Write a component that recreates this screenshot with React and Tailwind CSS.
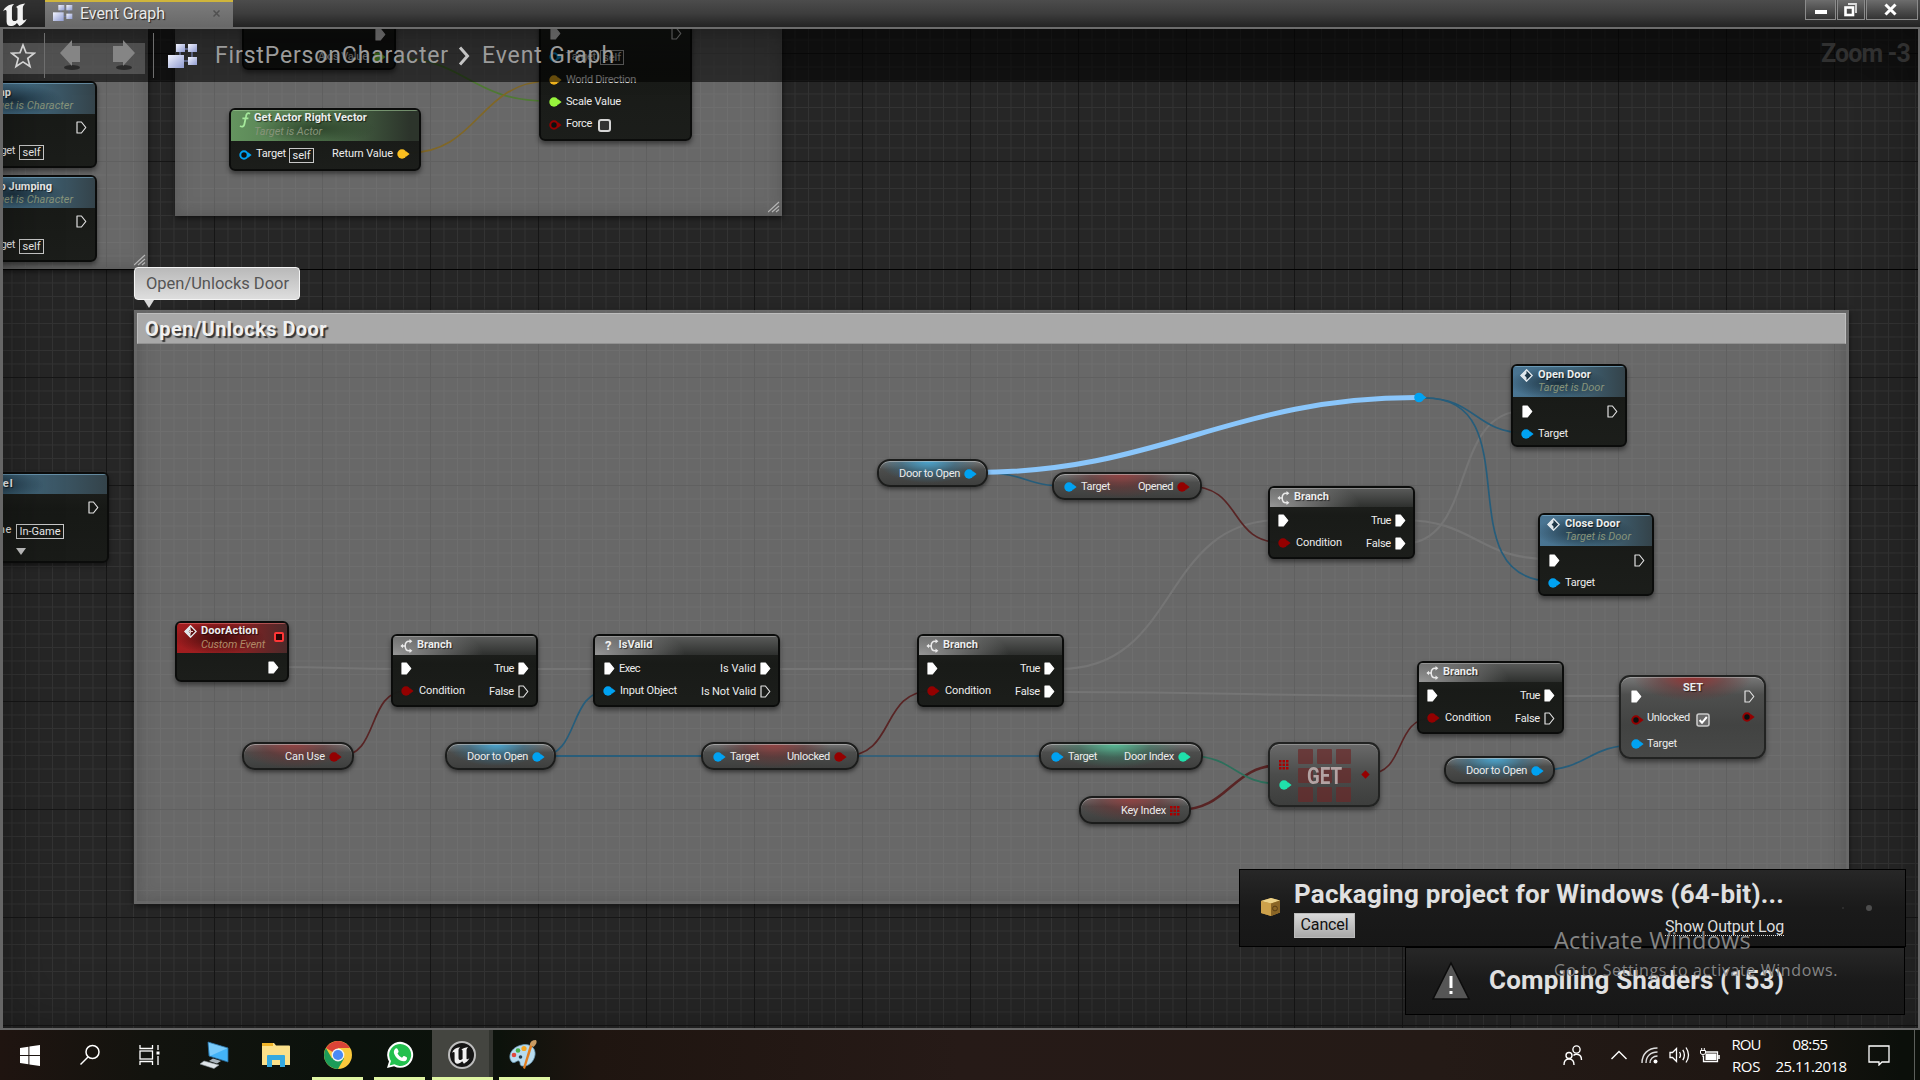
import React, { useLayoutEffect, useRef } from "react";

/* Text whose tracking is computed so that it fills the given width. */
function T({ w, className = "", children }) {
  const ref = useRef(null);
  useLayoutEffect(() => {
    const el = ref.current;
    if (!w || !el) return;
    el.style.letterSpacing = "0px";
    const natural = el.getBoundingClientRect().width;
    const n = el.textContent.length;
    el.style.letterSpacing = (w - natural) / n + "px";
  }, [w]);
  return (
    <span ref={ref} className={"inline-block w-fit shrink-0 whitespace-pre " + className}>
      {children}
    </span>
  );
}

const BLUE = "#00a2f2";
const RED = "#940000";
const TEAL = "#1fe0ab";

function Pin({ color, hollow, className = "" }) {
  return (
    <svg width="13" height="10" viewBox="0 0 13 10" className={"shrink-0 " + className}>
      <path d="M9 2.2 L12.6 5 L9 7.8 Z" fill={color} />
      {hollow ? (
        <circle cx="5" cy="5" r="3.7" fill="#0c1010" stroke={color} strokeWidth="2" />
      ) : (
        <circle cx="5" cy="5" r="4.7" fill={color} />
      )}
    </svg>
  );
}

function Exec({ on, className = "" }) {
  return (
    <svg width="11" height="13" viewBox="0 0 11 13" className={"shrink-0 " + className}>
      <path
        d="M1 1 H5.4 L9.8 6.5 L5.4 12 H1 Z"
        fill={on ? "#fff" : "none"}
        stroke={on ? "#fff" : "#e2e2e2"}
        strokeWidth="1.2"
        strokeLinejoin="round"
      />
    </svg>
  );
}

function GridPin({ className = "" }) {
  const cells = [0, 3.5, 7];
  return (
    <svg width="10" height="10" viewBox="0 0 10 10" className={"shrink-0 " + className}>
      {cells.map((x) => cells.map((y) => <rect key={x + "-" + y} x={x} y={y} width="2.5" height="2.5" fill="#a80000" />))}
    </svg>
  );
}

function BranchIcon() {
  return (
    <svg width="13" height="14" viewBox="0 0 13 14" fill="none" stroke="#e8e8e8" strokeWidth="1.5" className="shrink-0">
      <path d="M10.5 2.2 H9 C6.6 2.2 5.2 4 5.2 7 S6.6 11.8 9 11.8 H10.5" />
      <path d="M1.5 7 H5" />
      <path d="M9.5 0 L12.4 2.2 L9.5 4.4 Z M9.5 9.6 L12.4 11.8 L9.5 14 Z M3 4.8 V9.2 L0.4 7 Z" fill="#e8e8e8" stroke="none" />
    </svg>
  );
}

function DiamondIcon({ red }) {
  return (
    <svg width="13" height="13" viewBox="0 0 13 13" className="shrink-0">
      <path d="M6.5 0.8 L12.2 6.5 L6.5 12.2 L0.8 6.5 Z" fill={red ? "#5c1010" : "#203848"} stroke="#e8eef2" strokeWidth="1.3" />
      <path d="M6.5 0.8 L0.8 6.5 L6.5 12.2 V8.6 L4.6 6.5 L6.5 4.4 Z" fill="#dfe7ec" />
      {red && <path d="M5 6.5 H9 M6.5 4.4 V8.6" stroke="#e8c9c9" strokeWidth="1.1" />}
    </svg>
  );
}

const SELF = "border border-[#c8c8c8] h-[15px] flex items-center justify-center text-[11px] leading-none text-[#ececec]";
const BODY =
  "bg-[linear-gradient(180deg,rgba(32,34,31,0.97),rgba(22,24,21,0.97)_40%,rgba(25,27,24,0.97))] border-2 border-[#0b0c0b] rounded-[6px] shadow-[0_3px_5px_rgba(0,0,0,0.45)] overflow-hidden box-border absolute";
const HGREY =
  "bg-[radial-gradient(ellipse_90px_34px_at_0%_100%,rgba(170,170,170,0.85),rgba(140,140,140,0.5)_55%,rgba(120,120,120,0)_100%),linear-gradient(180deg,#5a5b5a,#2e302e)] shadow-[inset_0_1px_0_rgba(190,190,190,0.45)]";
const HBLUE =
  "bg-[radial-gradient(ellipse_50px_16px_at_40%_55%,rgba(22,40,52,0.85),rgba(30,50,64,0)_100%),linear-gradient(90deg,#4a7593,#42697f_50%,#34434a_100%)] shadow-[inset_0_1px_0_rgba(130,180,210,0.6)]";
const HRED =
  "bg-[radial-gradient(ellipse_46px_16px_at_38%_50%,rgba(50,8,8,0.85),rgba(70,12,12,0)_100%),linear-gradient(90deg,#a31d1f,#8c2022_55%,#4b2a2a_100%)] shadow-[inset_0_1px_0_rgba(225,110,110,0.6)]";
const HGREEN =
  "bg-[radial-gradient(ellipse_60px_16px_at_45%_60%,rgba(38,58,36,0.8),rgba(40,60,38,0)_100%),linear-gradient(90deg,#64945f,#4d704a_50%,#2c342b_95%)] shadow-[inset_0_1px_0_rgba(160,200,150,0.6)]";
const TITLE = "font-bold text-[11px] leading-[12px] text-[#eceeee] [text-shadow:1px_1px_1px_rgba(0,0,0,0.6)]";
const SUB = "italic text-[11px] leading-[12px] ";
const OLIVE = "text-[#87947a]";
const LBL = "text-[11px] leading-[12px] text-[#ececec]";

function Branch({ at, falseOn }) {
  return (
    <div className={BODY + " w-[147px] h-[73px] " + at}>
      <div className={"h-[19px] flex items-center gap-[4px] pl-[7px] " + HGREY}>
        <BranchIcon />
        <T w={35} className={TITLE + " -mt-px"}>Branch</T>
      </div>
      <div className="flex justify-between pl-2 pr-[7px]">
        <div className="flex flex-col">
          <div className="h-[27px] flex items-center"><Exec on /></div>
          <div className="h-[17px] flex items-center gap-[5px]">
            <Pin color={RED} />
            <T w={46} className={LBL}>Condition</T>
          </div>
        </div>
        <div className="flex flex-col items-end">
          <div className="h-[27px] flex items-center gap-[4px]"><T w={20} className={LBL}>True</T><Exec on /></div>
          <div className="h-[19px] flex items-center gap-[4px]"><T w={25} className={LBL}>False</T><Exec on={falseOn} /></div>
        </div>
      </div>
    </div>
  );
}

function DoorCall({ at, title, w }) {
  return (
    <div className={BODY + " w-[116px] h-[83px] " + at}>
      <div className={"h-[31px] flex gap-[5px] pl-[7px] pt-[3px] " + HBLUE}>
        <DiamondIcon />
        <div className="flex flex-col gap-[1px]">
          <T w={w} className={TITLE}>{title}</T>
          <T w={66} className={SUB + OLIVE}>Target is Door</T>
        </div>
      </div>
      <div className="h-[28px] flex items-center justify-between pl-[9px] pr-[7px]"><Exec on /><Exec /></div>
      <div className="h-[17px] flex items-center gap-[4px] pl-[8px]"><Pin color={BLUE} /><T w={30} className={LBL}>Target</T></div>
    </div>
  );
}

const PILL =
  "absolute h-[28px] box-border border-2 border-[#1b1c1b] rounded-[13px] flex items-center overflow-hidden shadow-[0_2px_4px_rgba(0,0,0,0.5),inset_0_1px_0_rgba(200,200,200,0.55)] pt-px ";
const PBLUE = "bg-[radial-gradient(ellipse_50px_22px_at_46%_0%,rgba(72,168,212,0.95),rgba(50,120,155,0.5)_55%,rgba(60,100,120,0)_100%),linear-gradient(180deg,#777_0%,#4c4d4c_35%,#3e3f3e_100%)] ";
const PRED = "bg-[radial-gradient(ellipse_56px_24px_at_46%_0%,rgba(150,62,62,0.9),rgba(110,48,48,0.5)_55%,rgba(100,60,60,0)_100%),linear-gradient(180deg,#777_0%,#4c4d4c_35%,#3e3f3e_100%)] ";
const PTEAL = "bg-[radial-gradient(ellipse_66px_24px_at_46%_0%,rgba(84,190,150,0.95),rgba(60,130,105,0.5)_55%,rgba(60,100,90,0)_100%),linear-gradient(180deg,#777_0%,#4c4d4c_35%,#3e3f3e_100%)] ";

function DoorToOpen({ at }) {
  return (
    <div className={PILL + PBLUE + "w-[111px] justify-end gap-[4px] pr-[9px] " + at}>
      <T w={61} className={LBL}>Door to Open</T>
      <Pin color={BLUE} />
    </div>
  );
}

function Pair({ at, tone, label, w, color }) {
  return (
    <div className={PILL + tone + "justify-between pl-[10px] pr-[10px] " + at}>
      <div className="flex items-center gap-[4px]"><Pin color={BLUE} /><T w={29} className={LBL}>Target</T></div>
      <div className="flex items-center gap-[4px]"><T w={w} className={LBL}>{label}</T><Pin color={color} /></div>
    </div>
  );
}

function wire(x1, y1, x2, y2, k = 0.5) {
  const d = Math.abs(x2 - x1) * k;
  return `M${x1} ${y1} C${x1 + d} ${y1} ${x2 - d} ${y2} ${x2} ${y2}`;
}

function Wires() {
  const grey = [
    [275, 667, 404, 669], [525, 669, 606, 669], [768, 669, 926, 669], [1060, 669, 1280, 520, 0.55],
    [1060, 692, 1430, 696], [1560, 696, 1634, 696], [1402, 520, 1550, 559], [1402, 544, 1524, 411, 0.62],
  ];
  const blue = [
    [985, 473, 1066, 486], [1425, 398, 1526, 433], [1425, 398, 1552, 581, 0.85],
    [540, 756, 608, 691, 0.6], [540, 756, 718, 756], [540, 756, 1055, 756], [1540, 770, 1636, 745],
  ];
  const red = [[1187, 486, 1284, 543, 0.6], [340, 756, 406, 691, 0.6], [844, 756, 932, 691, 0.6], [1368, 774, 1432, 718, 0.6]];
  return (
    <svg width="1920" height="1080" className="absolute left-0 top-0 pointer-events-none" fill="none">
      {grey.map((a, i) => <path key={i} d={wire(...a)} stroke="#757575" strokeWidth="2.2" />)}
      {blue.map((a, i) => <path key={i} d={wire(...a)} stroke="#265d7b" strokeWidth="1.7" />)}
      {red.map((a, i) => <path key={i} d={wire(...a)} stroke="#582424" strokeWidth="1.7" />)}
      <path d={wire(1178, 810, 1282, 765)} stroke="#582424" strokeWidth="2.6" />
      <path d={wire(1190, 756, 1280, 784)} stroke="#2c6f5b" strokeWidth="1.7" />
      <path d={wire(388, 57, 548, 101)} stroke="#4f7a33" strokeWidth="1.7" />
      <path d={wire(408, 153, 550, 81)} stroke="#806726" strokeWidth="1.7" />
      <path d={wire(975, 472.5, 1416, 397.5, 0.42)} stroke="#8ac6fb" strokeWidth="5" />
      <circle cx="1419" cy="397.5" r="4.8" fill={BLUE} />
      <path d="M1422 394.5 L1426.5 397.5 L1422 400.5 Z" fill={BLUE} />
    </svg>
  );
}

const COMMENT = "absolute bg-[rgba(170,170,170,0.5)] border-[#5e5e5e] shadow-[0_2px_6px_rgba(0,0,0,0.6),inset_0_0_16px_rgba(60,60,60,0.35)]";

function Handle({ at }) {
  return (
    <svg width="12" height="12" viewBox="0 0 12 12" className={"absolute " + at} stroke="#b5b5b5" strokeWidth="1.2">
      <path d="M0 11 L11 1 M4 11 L11 5 M8 11 L11 8.5" />
    </svg>
  );
}

function CharNode({ at, title, w }) {
  return (
    <div className={BODY + " w-[141px] h-[87px] " + at}>
      <div className={"h-[31px] pl-[25px] pt-[4px] flex flex-col gap-[1px] " + HBLUE}>
        <T w={w} className={TITLE}>{title}</T>
        <T w={90} className={SUB + OLIVE}>Target is Character</T>
      </div>
      <div className="h-[27px] flex items-center justify-end pr-[8px]"><Exec /></div>
      <div className="flex items-start gap-[4px] pl-[28px] pt-[4px]">
        <T w={29} className={LBL}>Target</T>
        <div className={SELF + " w-[25px]"}>self</div>
      </div>
    </div>
  );
}

function GraphIcon({ className }) {
  return (
    <svg viewBox="0 0 30 26" className={className}>
      <defs>
        <linearGradient id="gi" x1="0" y1="0" x2="1" y2="1">
          <stop offset="0" stopColor="#f2f4ff" />
          <stop offset="1" stopColor="#8f9bd0" />
        </linearGradient>
      </defs>
      <path d="M12 6 H24 V18 M12 6 V18 H24" stroke="#6c76a0" strokeWidth="1.4" fill="none" />
      <g fill="url(#gi)">
        <rect x="8" y="1" width="9" height="8" />
        <rect x="20" y="1" width="9" height="8" />
        <rect x="0" y="12" width="16" height="13" />
        <rect x="20" y="14" width="9" height="8" />
      </g>
    </svg>
  );
}

function UnrealMark({ className }) {
  return (
    <svg viewBox="0 0 28 26" className={className} fill="#f2f2f2">
      <path d="M0 9 C2 4 6 1.5 12 1 C9.8 3 9.6 4 9.6 6 V16.5 C9.6 18.6 11 19.8 12.6 19.6 C14 19.4 15 18.6 15.6 17.8 V6.4 C15.6 5 14.8 4.4 13.6 4.6 C16 2.6 19.5 1.2 24 0.6 C22.2 2.4 21.4 3.6 21.4 5.6 V17 C21.4 18.8 22.4 19.4 25.6 17.2 C23.8 21 21 23.4 17.6 25 L15 21.6 C13 24 10.4 25 8 25 C5.4 24.8 3.8 23.4 3.8 20 V9.6 C3.8 7.4 2.4 7 0 9 Z" />
    </svg>
  );
}

function TitleBar() {
  const btn = "h-[20px] border border-[#8b8b8b] border-t-0 bg-gradient-to-b from-[#6d6d6d] to-[#343434] flex items-center justify-center shrink-0";
  return (
    <header className="h-[29px] shrink-0 flex items-start border-b-2 border-[#6c6c6c] bg-gradient-to-b from-[#4c4c4c] via-[#3d3d3d] to-[#232323]">
      <div className="w-[45px] h-[27px] shrink-0 bg-[#202020]/60"><UnrealMark className="w-[28px] h-[24px] mt-[3px] ml-[2px]" /></div>
      <div className="w-[188px] h-[27px] shrink-0 border-t-2 border-[#cfb53c] bg-gradient-to-b from-[#7c7c7c] to-[#686868] flex items-center pl-2">
        <GraphIcon className="w-[20px] h-[18px] -mt-[3px]" />
        <T w={85} className="ml-[7px] -mt-[2px] text-[16px] leading-none text-[#e9e9e9] [text-shadow:1px_1px_1px_#222]">Event Graph</T>
        <svg width="7" height="7" viewBox="0 0 7 7" className="ml-[48px] -mt-[2px]" stroke="#505050" strokeWidth="1.5"><path d="M0.5 0.5 L6.5 6.5 M6.5 0.5 L0.5 6.5" /></svg>
      </div>
      <div className="flex-1" />
      <div className="flex gap-px pr-[2px]">
        <div className={btn + " w-[31px]"}><div className="w-[12px] h-[4px] bg-[#fff] mt-[5px]" /></div>
        <div className={btn + " w-[28px]"}>
          <svg width="13" height="14" viewBox="0 0 13 14" fill="none" stroke="#fff" className="mr-[2px]"><rect x="1.5" y="4.5" width="7.5" height="7.5" strokeWidth="2.6" /><path d="M4 1 H12 V10" strokeWidth="1.8" stroke="#ddd" /></svg>
        </div>
        <div className={btn + " w-[52px]"}>
          <svg width="13" height="13" viewBox="0 0 13 13" stroke="#fff" strokeWidth="3" className="mr-[3px]"><path d="M1.5 1.5 L11.5 11.5 M11.5 1.5 L1.5 11.5" /></svg>
        </div>
      </div>
    </header>
  );
}

function Breadcrumb() {
  return (
    <div className="absolute left-0 top-[29px] w-full h-[53px] bg-[rgba(0,0,0,0.57)] flex items-center">
      <div className="flex items-center h-[46px] relative">
        <div className="absolute left-0 top-[10px] w-[145px] h-[31px] bg-[rgba(150,150,150,0.36)]" />
        <div className="relative w-[44px] flex justify-center pl-[2px]">
          <svg width="26" height="26" viewBox="0 0 26 26" fill="none" stroke="#d4d4d4" strokeWidth="1.7"><path d="M13 2 L16 9.8 L24.3 10.2 L17.8 15.4 L20 23.5 L13 18.9 L6 23.5 L8.2 15.4 L1.7 10.2 L10 9.8 Z" /></svg>
        </div>
        <div className="relative w-px h-[45px] bg-[#6e6e6e]" />
        <svg width="108" height="36" viewBox="0 0 108 36" className="relative">
          <ellipse cx="27" cy="29.5" rx="8" ry="2.5" fill="#1a1a1a" opacity="0.7" />
          <ellipse cx="79" cy="29.5" rx="8" ry="2.5" fill="#1a1a1a" opacity="0.7" />
          <path d="M15 15 L27 2 V8 H35 V24 H27 V28 Z" fill="#858585" />
          <path d="M90 15 L78 2 V8 H68 V24 H78 V28 Z" fill="#858585" />
        </svg>
        <div className="relative w-px h-[45px] bg-[#6e6e6e]" />
      </div>
      <GraphIcon className="w-[30px] h-[26px] ml-[14px]" />
      <T w={234} className="ml-[17px] text-[23px] leading-none text-[#9b9b9b]">FirstPersonCharacter</T>
      <svg width="12" height="20" viewBox="0 0 12 20" className="ml-[9px] mt-[1px]" fill="none" stroke="#c4c4c4" strokeWidth="3"><path d="M2 1.5 L9.5 10 L2 18.5" /></svg>
      <T w={133} className="ml-[12px] text-[23px] leading-none text-[#9b9b9b] -mt-[1px]">Event Graph</T>
      <div className="flex-1" />
      <T w={89} className="mr-[10px] text-[25px] leading-none font-bold text-[#303030] -mt-[4px]">Zoom -3</T>
    </div>
  );
}

function Graph() {
  return (
    <>
      {/* comment regions */}
      <div className={COMMENT + " left-0 top-[29px] w-[148px] h-[240px] border-b-2"}><Handle at="right-[2px] bottom-[1px]" /></div>
      <div className={COMMENT + " left-[175px] top-[29px] w-[607px] h-[187px] border-b"}><Handle at="right-[2px] bottom-[2px]" /></div>
      <div className={COMMENT + " left-[134px] top-[310px] w-[1715px] h-[594px] border-[3px] border-[#676767]/60"}>
        <div className="h-[31px] bg-[#a9a9a9] border border-[#bdbdbd] border-b-[#929292] flex items-center pl-[7px]">
          <T w={182} className="text-[20px] leading-none font-bold text-[#f1f1f1] [text-shadow:2px_2px_1px_#333]">Open/Unlocks Door</T>
        </div>
      </div>
      <div className="absolute left-[134px] top-[267px] w-[166px] h-[33px] rounded-[4px] border border-[#f4f4f4] bg-gradient-to-b from-[#b9b9b9] to-[#dedede] flex items-center pl-[11px] pt-[2px]">
        <T w={143} className="text-[16.5px] leading-none text-[#555]">Open/Unlocks Door</T>
      </div>
      <svg width="10" height="8" viewBox="0 0 10 8" className="absolute left-[144px] top-[300px]"><path d="M0 0 H10 L5 8 Z" fill="#d8d8d8" /></svg>

      <Wires />

      {/* character nodes, cut by the window edge */}
      <CharNode at="left-[-44px] top-[81px]" title="Jump" w={28} />
      <CharNode at="left-[-44px] top-[175px]" title="Stop Jumping" w={69} />
      <div className={BODY + " left-[-83px] top-[472px] w-[192px] h-[91px]"}>
        <div className={"h-[20px] flex items-center justify-start pl-[28px] " + HBLUE}><T w={67} className={TITLE}>Open Level</T></div>
        <div className="h-[27px] flex items-center justify-end pr-[8px]"><Exec /></div>
        <div className="flex items-start gap-[4px] justify-end pr-[43px] pt-[3px]">
          <T w={64} className={LBL}>Level Name</T>
          <div className={SELF + " w-[48px]"}>In-Game</div>
        </div>
        <svg width="10" height="7" viewBox="0 0 10 7" className="ml-[97px] mt-[9px]"><path d="M0 0 H10 L5 7 Z" fill="#c4c4c4" /></svg>
      </div>

      {/* movement input nodes */}
      <div className={BODY + " left-[242px] top-[20px] w-[154px] h-[50px]"}>
        <div className="flex justify-end pr-[8px] pt-[6px]"><Exec on /></div>
        <div className="flex items-center justify-end gap-[5px] pr-[8px] mt-[10px]"><T w={50} className={LBL}>Axis Value</T><Pin color="#7ee03a" /></div>
      </div>
      <div className={BODY + " left-[539px] top-[20px] w-[153px] h-[121px]"}>
        <div className="flex justify-between pl-[9px] pr-[8px] pt-[5px]"><Exec on /><Exec /></div>
        <div className="flex flex-col pl-[8px]">
          <div className="flex items-center gap-[4px] h-[24px] mt-[5px]"><Pin color={BLUE} hollow /><T w={30} className={LBL}>Target</T><div className={SELF + " w-[24px]"}>self</div></div>
          <div className="flex items-center gap-[4px] h-[22px]"><Pin color="#f0b41e" /><T w={70} className={LBL}>World Direction</T></div>
          <div className="flex items-center gap-[4px] h-[21px]"><Pin color="#97f43c" /><T w={55} className={LBL}>Scale Value</T></div>
          <div className="flex items-center gap-[4px] h-[26px]"><Pin color={RED} hollow /><T w={26} className={LBL + " -mt-[3px]"}>Force</T><div className="w-[13px] h-[13px] border-2 border-[#d5d5d5] rounded-[3px] bg-[#333] ml-[2px]" /></div>
        </div>
      </div>
      <div className={BODY + " left-[229px] top-[108px] w-[192px] h-[63px]"}>
        <div className={"h-[31px] flex gap-[4px] pl-[8px] pt-[2px] " + HGREEN}>
          <svg width="12" height="16" viewBox="0 0 12 16" fill="none" stroke="#a5e89b" strokeWidth="1.8"><path d="M11 1.8 C8.5 0.2 7.4 2 7 4.5 L5.4 12 C5 14.4 3.4 15.4 1 14 M3.4 6.4 H9.4" /></svg>
          <div className="flex flex-col gap-[2px] -ml-[1px]">
            <T w={113} className={TITLE}>Get Actor Right Vector</T>
            <T w={68} className={SUB + OLIVE}>Target is Actor</T>
          </div>
        </div>
        <div className="flex items-center justify-between pl-[8px] pr-[9px] h-[26px]">
          <div className="flex items-center gap-[3px] pt-[2px]"><Pin color={BLUE} hollow /><T w={30} className={LBL + " -mt-[3px] ml-px"}>Target</T><div className={SELF + " w-[25px]"}>self</div></div>
          <div className="flex items-center gap-[4px] -mt-[1px]"><T w={61} className={LBL}>Return Value</T><Pin color="#fbbf1f" /></div>
        </div>
      </div>

      {/* door logic, upper part */}
      <DoorToOpen at="left-[877px] top-[459px]" />
      <Pair at="left-[1052px] top-[472px] w-[150px]" tone={PRED} label="Opened" w={35} color={RED} />
      <Branch at="left-[1268px] top-[486px]" falseOn />
      <DoorCall at="left-[1511px] top-[364px]" title="Open Door" w={53} />
      <DoorCall at="left-[1538px] top-[513px]" title="Close Door" w={55} />

      {/* door logic, lower part */}
      <div className={BODY + " left-[175px] top-[621px] w-[114px] h-[61px]"}>
        <div className={"h-[30px] flex gap-[4px] pl-[7px] pt-[2px] " + HRED}>
          <DiamondIcon red />
          <div className="flex flex-col gap-[2px]">
            <T w={57} className={TITLE}>DoorAction</T>
            <T w={64} className={SUB + "text-[#b08a66]"}>Custom Event</T>
          </div>
          <div className="w-[10px] h-[10px] shrink-0 border-2 border-[#ff3636] rounded-[2px] bg-[#2a0505] mt-[7px] ml-[5px]" />
        </div>
        <div className="flex justify-end pr-[8px] pt-[8px]"><Exec on /></div>
      </div>
      <Branch at="left-[391px] top-[634px]" />
      <div className={PILL + PRED + "left-[242px] top-[742px] w-[112px] justify-end gap-[4px] pr-[10px]"}><T w={40} className={LBL}>Can Use</T><Pin color={RED} /></div>
      <DoorToOpen at="left-[445px] top-[742px]" />
      <div className={BODY + " left-[593px] top-[634px] w-[187px] h-[73px]"}>
        <div className={"h-[19px] flex items-center gap-[7px] pl-[10px] " + HGREY}>
          <span className="font-bold text-[13px] leading-none text-[#f0f0f0]">?</span>
          <T w={34} className={TITLE + " -mt-px"}>IsValid</T>
        </div>
        <div className="flex justify-between pl-[9px] pr-[7px]">
          <div className="flex flex-col">
            <div className="h-[27px] flex items-center gap-[4px]"><Exec on /><T w={21} className={LBL}>Exec</T></div>
            <div className="h-[17px] flex items-center gap-[4px] -ml-px"><Pin color={BLUE} /><T w={57} className={LBL}>Input Object</T></div>
          </div>
          <div className="flex flex-col items-end">
            <div className="h-[27px] flex items-center gap-[4px]"><T w={36} className={LBL}>Is Valid</T><Exec on /></div>
            <div className="h-[19px] flex items-center gap-[4px]"><T w={55} className={LBL}>Is Not Valid</T><Exec /></div>
          </div>
        </div>
      </div>
      <Pair at="left-[701px] top-[742px] w-[158px]" tone={PRED} label="Unlocked" w={43} color={RED} />
      <Branch at="left-[917px] top-[634px]" falseOn />
      <Pair at="left-[1039px] top-[742px] w-[164px]" tone={PTEAL} label="Door Index" w={50} color={TEAL} />
      <div className={PILL + PRED + "left-[1079px] top-[796px] w-[112px] justify-end gap-[4px] pr-[9px]"}><T w={45} className={LBL}>Key Index</T><GridPin /></div>
      <div className="absolute left-[1268px] top-[742px] w-[112px] h-[65px] border-2 border-[#222322] rounded-[11px] bg-gradient-to-b from-[#6a6a6a] via-[#4b4c4b] to-[#3d3e3d] shadow-[0_3px_5px_rgba(0,0,0,0.45),inset_0_1px_0_rgba(200,200,200,0.4)] flex items-center pl-[9px] pr-[8px]">
        <div className="flex flex-col gap-[10px]"><GridPin /><Pin color={TEAL} /></div>
        <div className="relative ml-[6px] grid grid-cols-3 gap-[4px] mt-[2px]">
          {[0, 1, 2, 3, 4, 5, 6, 7, 8].map((i) => <div key={i} className="w-[15px] h-[15px] rounded-[1px] bg-[#6b2a2a] opacity-70 blur-[0.7px]" />)}
          <div className="absolute inset-0 flex items-center justify-center text-[24px] leading-none font-bold text-[#b3a3a3] scale-x-[0.78]">GET</div>
        </div>
        <svg width="9" height="9" viewBox="0 0 9 9" className="ml-auto"><path d="M4.5 0.3 L8.7 4.5 L4.5 8.7 L0.3 4.5 Z" fill="#960000" /></svg>
      </div>
      <Branch at="left-[1417px] top-[661px]" />
      <DoorToOpen at="left-[1444px] top-[756px]" />
      <div className="absolute left-[1619px] top-[675px] w-[147px] h-[84px] border-2 border-[#222322] rounded-[11px] overflow-hidden bg-[radial-gradient(ellipse_60px_24px_at_50%_0%,rgba(150,46,46,0.95),rgba(110,48,48,0.5)_55%,rgba(90,60,60,0)_100%),linear-gradient(180deg,#787878_0%,#4e4f4e_22%,#424342_60%,#474847_100%)] shadow-[0_3px_5px_rgba(0,0,0,0.45),inset_0_1px_0_rgba(200,200,200,0.5)] flex flex-col pl-[10px] pr-[9px]">
        <div className="flex justify-between h-[30px] pt-[13px]"><Exec on /><T w={20} className={TITLE + " -mt-[8px]"}>SET</T><Exec /></div>
        <div className="flex justify-between h-[22px] items-center mt-[3px]">
          <div className="flex items-center gap-[4px]"><Pin color={RED} hollow /><T w={43} className={LBL + " -mt-[4px] -ml-px"}>Unlocked</T>
            <svg width="14" height="14" viewBox="0 0 14 14" className="ml-[2px]"><rect x="1" y="1" width="12" height="12" rx="2" fill="#6a6a6a" stroke="#c9c9c9" strokeWidth="1.6" /><path d="M3.6 7 L6 9.8 L10.8 4" stroke="#fff" strokeWidth="2" fill="none" /></svg>
          </div>
          <Pin color={RED} hollow className="-mt-[5px]" />
        </div>
        <div className="flex items-center gap-[4px] h-[28px]"><Pin color={BLUE} /><T w={30} className={LBL + " -ml-px"}>Target</T></div>
      </div>
    </>
  );
}

function Notices() {
  const box = "absolute border border-black bg-gradient-to-b from-[#272727] via-[#1a1a1a] to-[#171717] ";
  return (
    <>
      <div className={box + "left-[1239px] top-[869px] w-[667px] h-[78px] flex"}>
        <svg width="21" height="20" viewBox="0 0 21 20" className="ml-[20px] mt-[27px]">
          <path d="M1 4 L11 1 L20 3.5 V15.5 L11 19 L1 16 Z" fill="#b98f3c" />
          <path d="M1 4 L11 1 L20 3.5 L11 6.5 Z" fill="#ecd28a" />
          <path d="M11 6.5 L20 3.5 V15.5 L11 19 Z" fill="#8b6626" />
          <path d="M1 4 L11 6.5 V19 L1 16 Z" fill="#cda14b" />
          <circle cx="15" cy="11.5" r="2.4" fill="none" stroke="#5a3f14" />
        </svg>
        <div className="ml-[13px] mt-[10px] w-[491px] flex flex-col">
          <T w={490} className="text-[26px] leading-[28px] font-bold text-[#e0e0e0]">Packaging project for Windows (64-bit)...</T>
          <div className="flex justify-between items-start mt-[5px]">
            <div className="w-[61px] h-[25px] bg-gradient-to-b from-[#d8d8d8] to-[#a9a9a9] border border-[#bbb] flex items-center justify-center"><T w={48} className="text-[16px] leading-none text-[#111] -mt-px">Cancel</T></div>
            <T w={119} className="text-[16px] leading-none text-[#dedede] border-b border-dotted border-[#ddd] mt-[6px] mr-px">Show Output Log</T>
          </div>
        </div>
        <div className="flex items-center ml-[57px] gap-[22px]"><div className="w-[2px] h-[2px] rounded-full bg-[#333]" /><div className="w-[6px] h-[6px] rounded-full bg-[#4d4d4d]" /></div>
      </div>
      <div className={box + "left-[1405px] top-[947px] w-[500px] h-[68px] flex items-center"}>
        <svg width="40" height="40" viewBox="0 0 40 40" className="ml-[25px]"><path d="M20 2 L38 38 H2 Z" fill="#555" stroke="#0c0c0c" strokeWidth="1.6" /><path d="M20 15 V27 M20 30 V33" stroke="#fff" strokeWidth="3" /></svg>
        <T w={295} className="ml-[18px] -mt-[2px] text-[26px] leading-none font-bold text-[#e0e0e0]">Compiling Shaders (153)</T>
      </div>
      <div className="absolute left-[1554px] top-[926px] flex flex-col font-['Open_Sans','Noto_Sans',sans-serif] text-[#858585]">
        <T w={197} className="text-[23.5px] leading-[28px]">Activate Windows</T>
        <T w={284} className="text-[16px] leading-[20px] mt-[6px]">Go to Settings to activate Windows.</T>
      </div>
    </>
  );
}

function Taskbar() {
  const slot = "h-full flex items-center justify-center shrink-0 relative ";
  const line = <div className="absolute left-0 bottom-0 w-full h-[3px] bg-[#dff5a3]" />;
  return (
    <footer className="h-[50px] shrink-0 flex items-center text-white font-['Open_Sans','Noto_Sans',sans-serif] bg-[linear-gradient(90deg,#1f1410_0%,#12130e_8%,#0b120c_18%,#0c120b_26%,#1f1510_31%,#261a17_50%,#241a16_75%,#1f1713_90%,#0b0f0a_99%)]">
      <div className={slot + "w-[60px]"}>
        <svg width="20" height="21" viewBox="0 0 20 21" fill="#fff"><path d="M0 3 L8.4 1.8 V10 H0 Z M9.4 1.6 L20 0 V10 H9.4 Z M0 11 H8.4 V19.2 L0 18 Z M9.4 11 H20 V21 L9.4 19.4 Z" /></svg>
      </div>
      <div className={slot + "w-[60px]"}>
        <svg width="22" height="22" viewBox="0 0 22 22" fill="none" stroke="#fff" strokeWidth="1.5"><circle cx="13.5" cy="8" r="6.5" /><path d="M9 13 L1.5 20.5" /></svg>
      </div>
      <div className={slot + "w-[60px]"}>
        <svg width="22" height="20" viewBox="0 0 22 20" fill="none" stroke="#fff" strokeWidth="1.3"><path d="M1 0 V3.5 H13.5 V0 M1 20 V16.5 H13.5 V20" /><rect x="1" y="6" width="12.5" height="8" /><path d="M19 0 V5 M19 11 V20" /><rect x="17.5" y="6.5" width="3" height="3" fill="#fff" stroke="none" /></svg>
      </div>
      <div className={slot + "w-[68px]"}>
        <svg width="29" height="28" viewBox="0 0 29 28"><path d="M8 1 L28 7 V21 L9 15 Z" fill="#43b3f7" /><path d="M8 1 L28 7 L10 15 Z" fill="#79cbfb" /><path d="M8 1 L28 7 V21 L9 15 Z" fill="none" stroke="#2a6c9c" strokeWidth="0.8" /><path d="M13 17.5 L21 20 L17 22.5 L9 20 Z" fill="#a9b4bb" /><path d="M4 20 L19 24 L14 27.5 L0 23 Z" fill="#dfe5e8" stroke="#8d989f" strokeWidth="0.6" /></svg>
      </div>
      <div className={slot + "w-[56px]"}>
        <svg width="28" height="25" viewBox="0 0 28 25"><path d="M0 1 Q0 0 1 0 H12 L14 2.5 H27 Q28 2.5 28 3.5 V22 H0 Z" fill="#fbe08a" /><rect x="0" y="0" width="11" height="3" fill="#f0b429" /><path d="M5 24 V13 Q5 12 6 12 H22 Q23 12 23 13 V24 H18 V17 H10 V24 Z" fill="#35a9e0" /></svg>
      </div>
      <div className={slot + "w-[51px] ml-[8px]"}>
        <svg width="28" height="28" viewBox="0 0 28 28"><circle cx="14" cy="14" r="14" fill="#fbc93c" /><path d="M14 14 L1.9 7 A14 14 0 0 1 26.1 7 H14 Z" fill="#db4437" /><path d="M1.9 7 A14 14 0 0 0 14 28 L20 17.4 L14 14 L8 17.4 Z" fill="#1c9c58" /><circle cx="14" cy="14" r="6.4" fill="#f4f4f4" /><circle cx="14" cy="14" r="5.1" fill="#4a8af4" /></svg>
        {line}
      </div>
      <div className={slot + "w-[51px] ml-[11px]"}>
        <svg width="28" height="28" viewBox="0 0 28 28"><path d="M1 27 L3 20.5 A13 13 0 1 1 8 25.3 Z" fill="#fff" /><path d="M3.6 24.6 L5 20 A11 11 0 1 1 8.4 23.3 Z" fill="#23c04e" /><path d="M9.5 7.5 Q11 6.7 11.7 8.2 L12.6 10.3 Q12.8 11 11.5 12.4 Q13 15.3 16 16.7 L17.6 15 Q18 14.6 21 16.4 Q21.4 19.6 18 20.3 C13 20.4 8 15 7.8 11 Q7.9 8.6 9.5 7.5 Z" fill="#fff" /></svg>
        {line}
      </div>
      <div className={slot + "w-[61px] ml-[7px] bg-[#444540] border-r-[4px] border-[#32342f]"}>
        <div className="w-[28px] h-[28px] rounded-full bg-[#151515] border-2 border-[#bdbdbd] flex items-center justify-center ml-[2px]"><UnrealMark className="w-[19px] h-[19px]" /></div>
        <div className="absolute left-0 bottom-0 w-[61px] h-[3px] bg-[#dff5a3]" />
      </div>
      <div className={slot + "w-[51px] ml-[6px]"}>
        <svg width="30" height="30" viewBox="0 0 30 30" className="mr-[3px]"><path d="M14 5 C22 3 28 8 27 15 C26 22 20 27 14 26 C11 25.4 13 22 11 21 C9 20 7 24 4 22 C-1 17 3 7 14 5 Z" fill="#b8dcef" stroke="#6a9ab8" strokeWidth="0.8" /><circle cx="6" cy="15" r="2.3" fill="#e0483c" /><circle cx="10" cy="10.5" r="2.3" fill="#49b04a" /><circle cx="16" cy="8.5" r="2.6" fill="#f5a623" /><circle cx="12.5" cy="17" r="1.8" fill="#243c4c" /><path d="M25 4 L17 29 L15 28 L22.5 3 Z" fill="#e27d1f" /><path d="M22 5 Q22 0 28 0 Q30 3 25.5 7 Z" fill="#c99b62" /></svg>
        {line}
      </div>
      <div className="flex-1" />
      <svg width="20" height="21" viewBox="0 0 20 21" fill="none" stroke="#fff" strokeWidth="1.4" className="shrink-0"><circle cx="13.5" cy="4.5" r="3.6" /><circle cx="6" cy="10.5" r="3" /><path d="M1 20 C1 16 3 14 6 14 S11 16 11 20 M10.5 10.5 C12 8.8 18.5 8 18.5 15" /></svg>
      <svg width="18" height="10" viewBox="0 0 18 10" fill="none" stroke="#fff" strokeWidth="1.4" className="shrink-0 ml-[27px]"><path d="M1.5 9 L9 1.5 L16.5 9" /></svg>
      <svg width="18" height="17" viewBox="0 0 18 17" fill="none" stroke="#ddd" strokeWidth="1.4" className="shrink-0 ml-[13px]"><path d="M1 16 C1 7 7 1 16.5 1 M5 16 C5 9.5 9.5 5 16.5 5 M9 16 C9 12 12 9 16.5 9" /><circle cx="14.5" cy="14.5" r="2" fill="#fff" stroke="none" /></svg>
      <svg width="22" height="18" viewBox="0 0 22 18" fill="none" stroke="#fff" strokeWidth="1.3" className="shrink-0 ml-[10px]"><path d="M1 6.5 H3.5 L7.5 2.5 V15.5 L3.5 11.5 H1 Z M10.5 6 Q12.5 9 10.5 12 M13.8 3.8 Q17 9 13.8 14.2 M17 1.5 Q22 9 17 16.5" /></svg>
      <svg width="20" height="15" viewBox="0 0 20 15" className="shrink-0 ml-[9px] mt-[1px]"><path d="M5 4 H17.5 V13.5 H3.5 V8" fill="none" stroke="#fff" strokeWidth="1.3" /><rect x="5.5" y="5.5" width="11" height="6.5" fill="#fff" /><rect x="18.2" y="7" width="1.6" height="4" fill="#fff" /><path d="M0.5 2.5 H5.5 V5 Q5.5 6.5 3 6.5 Q0.5 6.5 0.5 5 Z M1.7 0 V2.5 M4.3 0 V2.5 M3 6.5 V9" fill="none" stroke="#fff" /></svg>
      <div className="w-[30px] flex flex-col items-center text-[15px] leading-[22px] ml-[11px] -mt-px shrink-0"><T w={29}>ROU</T><T w={28}>ROS</T></div>
      <div className="w-[72px] flex flex-col items-center text-[15px] leading-[22px] ml-[14px] -mt-px shrink-0"><T w={35} className="mr-[2px]">08:55</T><T w={71}>25.11.2018</T></div>
      <svg width="22" height="21" viewBox="0 0 22 21" fill="none" stroke="#fff" strokeWidth="1.3" className="shrink-0 ml-[21px] mr-[24px] mt-[1px]"><path d="M1 1 H21 V17 H14 L11 20 V17 H1 Z" /></svg>
      <div className="w-px h-full bg-[#5c5f5b] mr-[5px] shrink-0" />
    </footer>
  );
}

export default function App() {
  return (
    <div className="w-[1920px] h-[1080px] relative overflow-hidden flex flex-col bg-[#262626] font-['Roboto','Liberation_Sans',sans-serif]">
      <TitleBar />
      <main className="flex-1 min-h-0">
        <div className="absolute left-0 top-[29px] w-[1920px] h-[1001px] bg-[#262626] bg-[position:106px_24px,106px_24px,106px_24px,106px_24px] bg-[size:108px_108px,108px_108px,13.5px_13.5px,13.5px_13.5px] bg-[image:linear-gradient(90deg,#161616_1px,transparent_1px),linear-gradient(180deg,#161616_1px,transparent_1px),linear-gradient(90deg,#333333_1px,transparent_1px),linear-gradient(180deg,#333333_1px,transparent_1px)]" />
        <div className="absolute left-0 top-[269px] w-full h-px bg-black" />
        <div className="absolute left-0 top-0 w-[1920px] h-[1030px] overflow-hidden [clip-path:inset(29px_0_0_0)]">
          <Graph />
          <div className="absolute inset-0 top-[29px] pointer-events-none shadow-[inset_0_0_60px_rgba(0,0,0,0.35)]" />
          <Breadcrumb />
          <Notices />
          <div className="absolute left-0 top-[29px] w-full h-[1001px] border-l-[3px] border-r-2 border-b-2 border-[#666] pointer-events-none" />
        </div>
      </main>
      <Taskbar />
    </div>
  );
}
